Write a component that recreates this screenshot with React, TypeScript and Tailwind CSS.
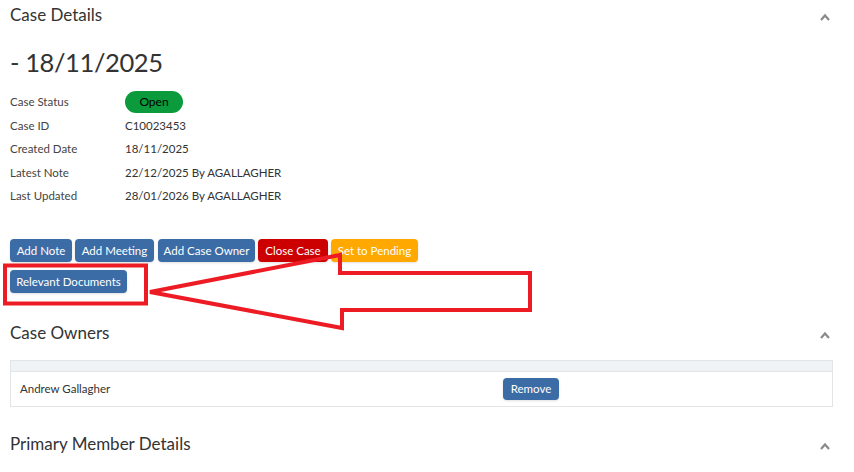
import React from "react"

const font = { fontFamily: "Lato, 'Noto Sans', sans-serif" }

function Chevron() {
  return (
    <svg width="12" height="10" viewBox="0 0 12 10" className="mt-[4px]">
      <path d="M2 8 L6 3.5 L10 8" fill="none" stroke="#8a8a8a" strokeWidth="2.2" strokeLinejoin="miter" />
    </svg>
  )
}

function SectionHeader({ title }: { title: string }) {
  return (
    <div className="flex items-center justify-between h-[30px] pr-[2px]">
      <h2 className="text-[17px] text-[#333]">{title}</h2>
      <Chevron />
    </div>
  )
}

export default function App() {
  const rows: [string, React.ReactNode][] = [
    ["Case Status", <span className="inline-flex items-center justify-center w-[58px] h-[22px] rounded-full bg-[#0b9a3c] text-black text-[12px]">Open</span>],
    ["Case ID", "C10023453"],
    ["Created Date", "18/11/2025"],
    ["Latest Note", "22/12/2025 By AGALLAGHER"],
    ["Last Updated", "28/01/2026 By AGALLAGHER"],
  ]

  const buttons = [
    { label: "Add Note", cls: "bg-[#3b6ca6] w-[62px]" },
    { label: "Add Meeting", cls: "bg-[#3b6ca6] w-[79px] ml-[3px]" },
    { label: "Add Case Owner", cls: "bg-[#3b6ca6] w-[97px] ml-[4px]" },
    { label: "Close Case", cls: "bg-[#cc0000] w-[70px] ml-[3px]" },
    { label: "Set to Pending", cls: "bg-[#ffa800] w-[87px] ml-[3px]" },
  ]

  return (
    <div className="relative w-[854px] h-[472px] overflow-hidden bg-white text-[#333]" style={font}>
      <div className="pl-[10px] pr-[21px]">
        <SectionHeader title="Case Details" />

        <h1 className="mt-[16px] h-[32px] leading-[32px] text-[25.5px] tracking-[-0.4px] text-[#333]">- 18/11/2025</h1>

        <div className="mt-[12px] grid grid-cols-[115px_1fr] auto-rows-[23.5px] items-center text-[11.5px]">
          {rows.map(([label, value]) => (
            <React.Fragment key={label}>
              <div className="text-[#444]">{label}</div>
              <div className="text-[#333]">{value}</div>
            </React.Fragment>
          ))}
        </div>

        <div className="mt-[31.5px] flex">
          {buttons.map((b) => (
            <button key={b.label} className={`h-[23px] rounded-[4px] text-white text-[11.5px] shadow-sm ${b.cls}`}>
              {b.label}
            </button>
          ))}
        </div>
        <div className="mt-[8px] flex">
          <button className="h-[23px] w-[117px] rounded-[4px] bg-[#3b6ca6] text-white text-[11.5px] shadow-sm">
            Relevant Documents
          </button>
        </div>

        <div className="mt-[25px]">
          <SectionHeader title="Case Owners" />
        </div>

        <div className="mt-[12px] border border-[#e2e5e8]">
          <div className="h-[11px] bg-[#f0f3f6] border-b border-[#e2e5e8]" />
          <div className="grid grid-cols-[483px_1fr] h-[34px] items-center text-[11.5px]">
            <div className="pl-[9px]">Andrew Gallagher</div>
            <div className="pl-[9px]">
              <button className="h-[22px] w-[56px] rounded-[4px] bg-[#3b6ca6] text-white text-[11.5px] shadow-sm">Remove</button>
            </div>
          </div>
        </div>

        <div className="mt-[22px]">
          <SectionHeader title="Primary Member Details" />
        </div>
      </div>

      {/* annotation overlay */}
      <svg className="absolute left-0 top-0 pointer-events-none" width="854" height="472">
        <rect x="5" y="265.5" width="141" height="38" fill="none" stroke="#ed1c24" strokeWidth="4" />
        <path
          d="M150 292 L340 255 L340 273 L530 273 L530 310 L342 310 L342 328 Z"
          fill="none"
          stroke="#ed1c24"
          strokeWidth="4"
          strokeLinejoin="miter"
        />
      </svg>
    </div>
  )
}
